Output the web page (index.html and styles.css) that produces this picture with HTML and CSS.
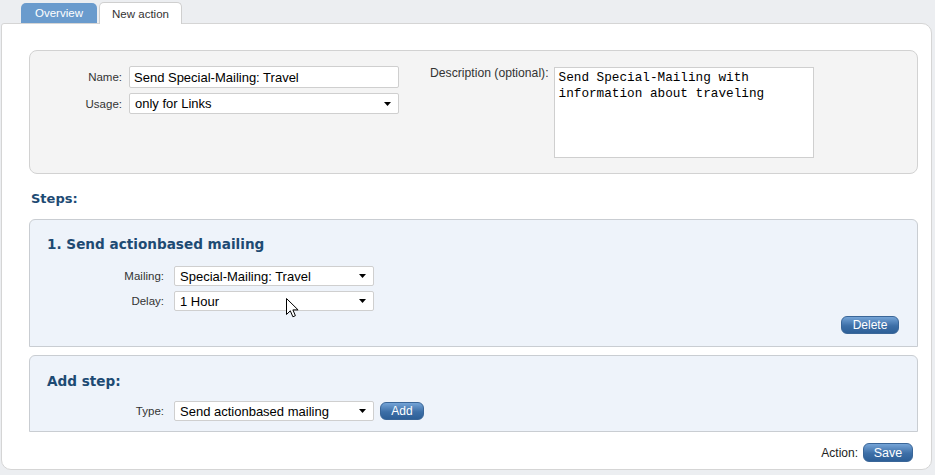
FILE: index.html
```html
<!DOCTYPE html>
<html>
<head>
<meta charset="utf-8">
<link rel="stylesheet" href="styles.css">
</head>
<body>
<div class="tabs">
  <div class="tab tab-inactive">Overview</div>
  <div class="tab tab-active">New action</div>
</div>
<div class="panel">
  <div class="general">
    <div class="form-grid general-left">
      <label class="lbl">Name:</label>
      <input class="text-input" type="text" value="Send Special-Mailing: Travel">
      <label class="lbl">Usage:</label>
      <div class="select select-wide"><span>only for Links</span><svg class="arrow" width="7" height="4" viewBox="0 0 7 4"><path d="M0 0H7L3.5 4Z" fill="#000"/></svg></div>
    </div>
    <div class="general-right">
      <label class="lbl desc-lbl">Description (optional):</label>
      <textarea class="desc">Send Special-Mailing with
information about traveling</textarea>
    </div>
  </div>

  <h2 class="section-title">Steps:</h2>

  <div class="step-box step-first">
    <h3 class="step-title">1. Send actionbased mailing</h3>
    <div class="form-grid step-grid">
      <label class="lbl">Mailing:</label>
      <div class="select"><span>Special-Mailing: Travel</span><svg class="arrow" width="7" height="4" viewBox="0 0 7 4"><path d="M0 0H7L3.5 4Z" fill="#000"/></svg></div>
      <label class="lbl">Delay:</label>
      <div class="select has-cursor"><span>1 Hour</span><svg class="arrow" width="7" height="4" viewBox="0 0 7 4"><path d="M0 0H7L3.5 4Z" fill="#000"/></svg>
        <svg class="cursor" width="13" height="20" viewBox="0 0 13 20"><path d="M0.5 0.5V16.5L4.3 12.8L6.9 18.8L9.4 17.7L6.9 11.9H12.1Z" fill="#fff" stroke="#000" stroke-width="1" stroke-linejoin="round"/></svg>
      </div>
    </div>
    <div class="step-actions">
      <button class="btn">Delete</button>
    </div>
  </div>

  <div class="step-box step-add">
    <h3 class="step-title">Add step:</h3>
    <div class="form-grid step-grid">
      <label class="lbl">Type:</label>
      <div class="inline-row">
        <div class="select"><span>Send actionbased mailing</span><svg class="arrow" width="7" height="4" viewBox="0 0 7 4"><path d="M0 0H7L3.5 4Z" fill="#000"/></svg></div>
        <button class="btn btn-add">Add</button>
      </div>
    </div>
  </div>

  <div class="action-row">
    <span class="action-lbl">Action:</span>
    <button class="btn btn-save">Save</button>
  </div>
</div>
</body>
</html>
```
FILE: styles.css
```css
* { box-sizing: border-box; }
html, body { margin: 0; padding: 0; }
body {
  background: #eceef1;
  font-family: "Liberation Sans", Arial, sans-serif;
  font-size: 11px;
  color: #333;
  width: 935px;
  height: 475px;
  overflow: hidden;
}
.tabs {
  display: flex;
  align-items: flex-end;
  height: 23px;
  padding-left: 21px;
  gap: 2px;
}
.tab {
  font-size: 11.5px;
  border-radius: 5px 5px 0 0;
  display: flex;
  align-items: center;
  justify-content: center;
}
.tab-inactive {
  width: 76px;
  height: 20px;
  background: #6a9bcd;
  color: #fff;
}
.tab-active {
  width: 83px;
  height: 22px;
  background: #fff;
  border: 1px solid #cfcfcf;
  border-bottom: none;
  color: #333;
  position: relative;
  z-index: 1;
  margin-bottom: -1px;
}
.panel {
  margin-left: 1px;
  width: 931px;
  height: 447px;
  background: #fff;
  border: 1px solid #d5d5d5;
  border-radius: 3px 10px 10px 10px;
  padding: 26px 13px 0 27px;
}
.general {
  display: flex;
  height: 124px;
  background: #f4f4f4;
  border: 1px solid #d2d2d2;
  border-radius: 8px;
  padding-top: 15px;
}
.form-grid {
  display: grid;
  align-items: center;
  row-gap: 5px;
}
.general-left {
  grid-template-columns: 92px 270px;
  column-gap: 7px;
  align-self: flex-start;
}
.lbl {
  text-align: right;
  color: #333;
  font-size: 11.5px;
}
.text-input {
  height: 22px;
  border: 1px solid #cfcfcf;
  border-radius: 2px;
  background: #fff;
  font-family: "Liberation Sans", Arial, sans-serif;
  font-size: 13px;
  color: #000;
  padding: 0 4px;
  margin: 0;
  outline: none;
}
.select {
  position: relative;
  display: flex;
  align-items: center;
  justify-content: space-between;
  width: 200px;
  height: 20px;
  background: #fff;
  border: 1px solid #cfcfcf;
  border-radius: 2px;
  padding: 0 7px 0 5px;
  font-size: 13px;
  color: #000;
}
.select-wide {
  width: 270px;
  height: 21px;
}
.arrow { flex: none; }
.cursor {
  position: absolute;
  left: 111px;
  top: 6px;
}
.general-right {
  display: flex;
  align-items: flex-start;
  gap: 5px;
  margin-left: 31px;
  padding-top: 1px;
}
.desc-lbl { font-size: 12.2px; line-height: 13px; }
.desc {
  width: 260px;
  height: 91px;
  border: 1px solid #cfcfcf;
  background: #fff;
  font-family: "Liberation Mono", "Courier New", monospace;
  font-size: 12.7px;
  line-height: 16px;
  color: #000;
  padding: 2px 4px;
  margin: 0;
  resize: none;
  outline: none;
  overflow: hidden;
}
.section-title {
  margin: 17px 0 12px 2px;
  font-family: "DejaVu Sans", Verdana, sans-serif;
  font-weight: bold;
  font-size: 13px;
  line-height: 16px;
  color: #1d4a73;
}
.step-box {
  background: #eef3fa;
  border: 1px solid #c9cdd2;
  border-radius: 6px 6px 0 0;
  padding-left: 17px;
  padding-right: 18px;
}
.step-first {
  height: 128px;
  padding-top: 16px;
}
.step-add {
  height: 77px;
  margin-top: 8px;
  padding-top: 17px;
}
.step-title {
  margin: 0;
  font-family: "DejaVu Sans", Verdana, sans-serif;
  font-weight: bold;
  font-size: 13.6px;
  line-height: 16px;
  color: #1d4a73;
}
.step-first .step-title { margin-bottom: 14px; }
.step-add .step-title { margin-bottom: 12px; }
.step-grid {
  grid-template-columns: 117px auto;
  column-gap: 10px;
  justify-content: start;
}
.step-actions {
  display: flex;
  justify-content: flex-end;
  margin-top: 5px;
}
.btn {
  height: 18px;
  border: 1px solid #3a6698;
  border-radius: 6px;
  background: linear-gradient(#75a4d7, #3d6fa7 55%, #2d5f97);
  color: #fff;
  font-family: "Liberation Sans", Arial, sans-serif;
  font-size: 12px;
  padding: 0 10px;
  line-height: 16px;
  margin: 0;
}
.step-actions .btn { width: 58px; }
.inline-row {
  display: flex;
  align-items: center;
  gap: 6px;
}
.btn-add { width: 44px; padding: 0; }
.action-row {
  display: flex;
  justify-content: flex-end;
  align-items: center;
  gap: 5px;
  margin-top: 11px;
  padding-right: 5px;
}
.action-lbl {
  font-size: 12px;
  color: #222;
}
.btn-save {
  width: 50px;
  height: 19px;
  font-size: 12.5px;
  padding: 0;
}
```
